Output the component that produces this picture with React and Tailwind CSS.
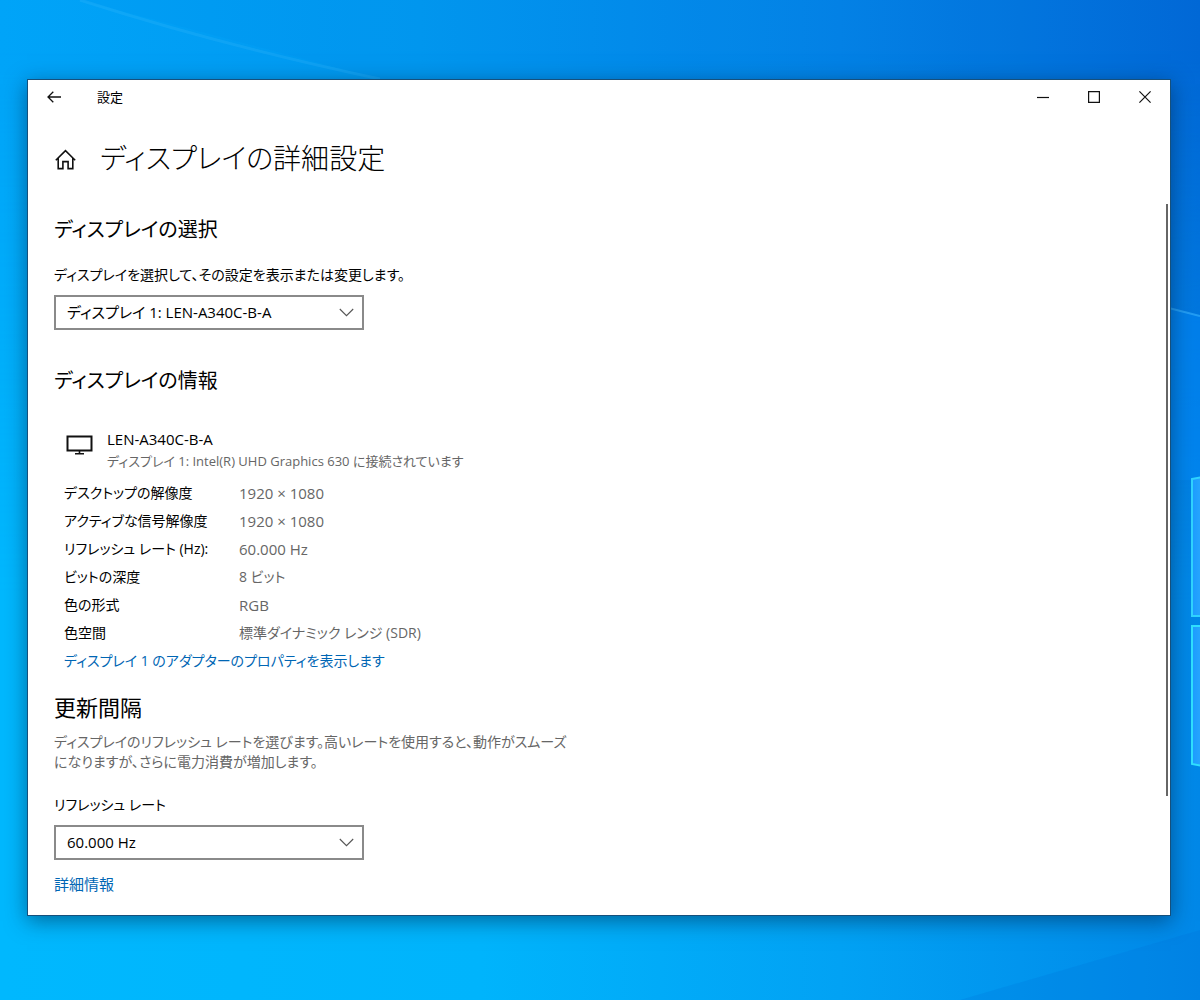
import React from "react";

const details = [
  ["デスクトップの解像度", "1920 × 1080", "text-[15px]"],
  ["アクティブな信号解像度", "1920 × 1080", "text-[15px]"],
  ["リフレッシュ レート (Hz):", "60.000 Hz", "text-[15px]"],
  ["ビットの深度", "8 ビット", "text-[14px]"],
  ["色の形式", "RGB", "text-[15px]"],
  ["色空間", "標準ダイナミック レンジ (SDR)", "text-[14px]"],
];

function Wallpaper() {
  return (
    <svg
      className="absolute inset-0 h-full w-full"
      viewBox="0 0 1200 1000"
      preserveAspectRatio="none"
      aria-hidden="true"
    >
      <defs>
        <linearGradient id="base" x1="0" y1="0" x2="1" y2="0">
          <stop offset="0" stopColor="#00a4f8" />
          <stop offset="0.35" stopColor="#0298f0" />
          <stop offset="0.7" stopColor="#0482e6" />
          <stop offset="1" stopColor="#0268d6" />
        </linearGradient>
        <linearGradient id="floor" x1="0" y1="0" x2="1" y2="0">
          <stop offset="0" stopColor="#00b8fe" />
          <stop offset="0.4" stopColor="#00b4fc" />
          <stop offset="0.7" stopColor="#02a2f4" />
          <stop offset="1" stopColor="#0088e8" />
        </linearGradient>
        <linearGradient id="fade" x1="0" y1="0" x2="0" y2="1">
          <stop offset="0.05" stopColor="#fff" stopOpacity="0" />
          <stop offset="0.6" stopColor="#fff" stopOpacity="1" />
        </linearGradient>
        <mask id="lower">
          <rect width="1200" height="1000" fill="url(#fade)" />
        </mask>
        <linearGradient id="pane" x1="0" y1="0" x2="1" y2="0">
          <stop offset="0" stopColor="#1c9cff" />
          <stop offset="1" stopColor="#2aa8ff" />
        </linearGradient>
      </defs>
      <rect width="1200" height="1000" fill="url(#base)" />
      <rect width="1200" height="1000" fill="url(#floor)" mask="url(#lower)" />
      <path d="M80 0 380 79H1200V0Z" fill="#0078e0" opacity="0.06" />
      <path d="M80 0 Q220 45 380 79" fill="none" stroke="#5cc8ff" strokeWidth="3" opacity="0.15" />
      <path d="M1160 306 1200 316V480H1160Z" fill="#008cff" opacity="0.35" />
      <path d="M1165 307 1200 316" stroke="#3ab4ff" strokeWidth="2" opacity="0.6" />
      <path d="M960 1000 1200 930V1000Z" fill="#0070d8" opacity="0.2" />
      <path d="M1192 479 1202 477V616H1192Z" fill="url(#pane)" stroke="#30d4ff" strokeWidth="2" />
      <path d="M1192 626H1202V766L1192 764Z" fill="url(#pane)" stroke="#30e0ff" strokeWidth="2" />
    </svg>
  );
}

function Dropdown({ id, value }) {
  return (
    <div className="relative w-full max-w-[310px]">
      <select
        id={id}
        defaultValue={value}
        className="block h-[35px] w-full appearance-none rounded-none border-2 border-[#8a8a8a] bg-white pr-10 pb-[2px] pl-[11px] text-[15px] text-black"
      >
        <option>{value}</option>
      </select>
      <svg
        className="pointer-events-none absolute top-[13px] right-[10px] h-[9px] w-[15px]"
        viewBox="0 0 15 9"
        fill="none"
        stroke="#555"
        strokeWidth="1.1"
        aria-hidden="true"
      >
        <path d="M.8 1 7.5 7.7 14.2 1" />
      </svg>
    </div>
  );
}

function WindowButton({ label, children }) {
  return (
    <button type="button" aria-label={label} className="flex h-[34px] w-[51px] items-center justify-center">
      <svg width="12" height="12" viewBox="0 0 12 12" fill="none" stroke="#111" strokeWidth="1.2" aria-hidden="true">
        {children}
      </svg>
    </button>
  );
}

export default function App() {
  return (
    <div className="relative flex min-h-screen flex-col overflow-hidden bg-[#0298f0] pt-[79px] pr-[29px] pb-[84px] pl-[27px] font-['Open_Sans','Noto_Sans_CJK_JP',sans-serif] text-[14px] leading-5 text-black [font-feature-settings:'palt']">
      <Wallpaper />
      <div className="relative flex flex-1 flex-col border border-[#16507c] bg-white shadow-[0_5px_20px_rgba(0,30,60,0.5)]">
        <header className="flex h-[34px] items-center">
          <button type="button" aria-label="戻る" className="flex h-[34px] w-[52px] items-center justify-center">
            <svg width="14" height="12" viewBox="0 0 14 12" fill="none" stroke="#111" strokeWidth="1.3" aria-hidden="true">
              <path d="M14 6H1M6.3.7 1 6l5.3 5.3" />
            </svg>
          </button>
          <span className="ml-[17px] text-[13px]">設定</span>
          <div className="ml-auto flex">
            <WindowButton label="最小化">
              <path d="M0 6.5h12" />
            </WindowButton>
            <WindowButton label="最大化">
              <path d="M.6.6h10.8v10.8H.6Z" />
            </WindowButton>
            <WindowButton label="閉じる">
              <path d="M.4.4 11.6 11.6M11.6.4.4 11.6" />
            </WindowButton>
          </div>
        </header>

        <div className="flex h-[90px] items-start pt-[23px] pl-[27px]">
          <a href="#home" aria-label="ホーム" className="mt-3">
            <svg width="21" height="21" viewBox="0 0 21 21" fill="none" stroke="#111" strokeWidth="1.6" aria-hidden="true">
              <path d="M.8 11.2 10.5 1.6l9.7 9.6M3.2 9v10.6h4.7v-7h5.2v7h4.7V9" />
            </svg>
          </a>
          <h1 className="ml-6 text-[28px] leading-[42px] font-light">ディスプレイの詳細設定</h1>
        </div>

        <div className="flex flex-1">
          <main className="flex-1 pl-[26px]">
            <h2 className="mt-[10px] text-[20px] leading-8">ディスプレイの選択</h2>
            <label htmlFor="display" className="mt-[19px] block">
              ディスプレイを選択して、その設定を表示または変更します。
            </label>
            <div className="mt-[10px]">
              <Dropdown id="display" value="ディスプレイ 1: LEN-A340C-B-A" />
            </div>

            <h2 className="mt-[35px] text-[20px] leading-8">ディスプレイの情報</h2>
            <div className="mt-8 flex">
              <svg className="mt-[6px] ml-3 h-5 w-[27px]" viewBox="0 0 27 20" fill="none" stroke="#111" strokeWidth="2" aria-hidden="true">
                <path d="M1.5 1.5h24v14h-24Z" />
                <path d="M13.5 16v3M9 18.7h9" strokeWidth="1.6" />
              </svg>
              <div className="ml-[14px]">
                <p className="text-[15px]">LEN-A340C-B-A</p>
                <p className="text-[13px] leading-6 text-[#666]">
                  ディスプレイ 1: Intel(R) UHD Graphics 630 に接続されています
                </p>
              </div>
            </div>
            <dl className="mt-[6px] pl-[10px] leading-7">
              {details.map(([name, value, size]) => (
                <div key={name} className="flex">
                  <dt className="w-[175px] shrink-0">{name}</dt>
                  <dd className={`${size} text-[#666]`}>{value}</dd>
                </div>
              ))}
            </dl>
            <a href="#adapter" className="ml-[10px] block w-fit leading-7 text-[#0066b4]">
              ディスプレイ 1 のアダプターのプロパティを表示します
            </a>

            <h2 className="mt-4 text-[22px] leading-8">更新間隔</h2>
            <p className="mt-[9px] max-w-[520px] text-[#666]">
              ディスプレイのリフレッシュ レートを選びます。高いレートを使用すると、動作がスムーズになりますが、さらに電力消費が増加します。
            </p>
            <label htmlFor="rate" className="mt-[23px] block">
              リフレッシュ レート
            </label>
            <div className="mt-[10px]">
              <Dropdown id="rate" value="60.000 Hz" />
            </div>
            <a href="#more" className="mt-[14px] inline-block text-[15px] text-[#0066b4]">
              詳細情報
            </a>
          </main>
          <div className="mr-[2px] h-[592px] w-[2px] bg-[#666]" />
        </div>
      </div>
    </div>
  );
}
